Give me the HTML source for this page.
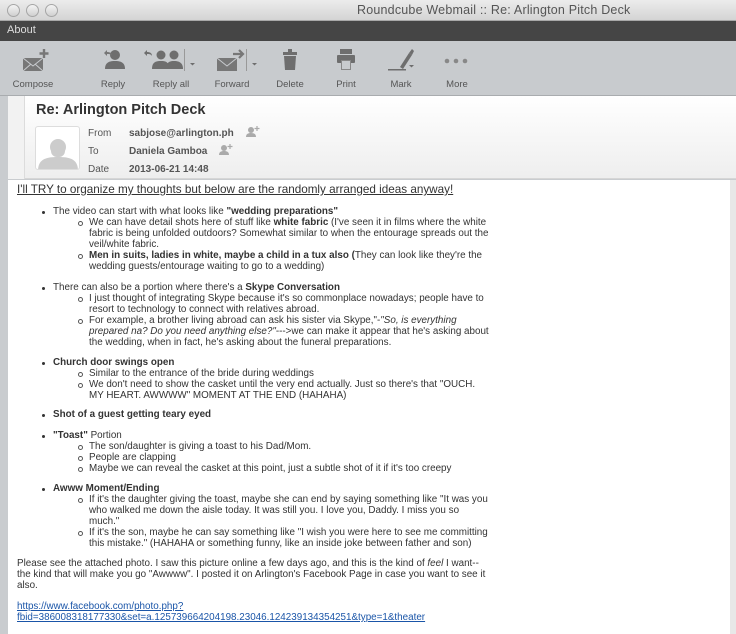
<!DOCTYPE html>
<html><head><meta charset="utf-8"><style>
*{margin:0;padding:0;box-sizing:border-box}
body{width:736px;height:634px;overflow:hidden;background:#c9cccf;font-family:"Liberation Sans",Arial,sans-serif;position:relative}
.a{position:absolute;white-space:nowrap}
#title{left:0;top:0;width:736px;height:21px;background:linear-gradient(#ececec,#d4d4d4);border-bottom:1px solid #a8a8a8}
.dot{position:absolute;top:4px;width:13px;height:13px;border-radius:50%;border:1px solid #a6a6a6;background:linear-gradient(#f4f4f4,#d0d0d0)}
#menu{left:0;top:21px;width:736px;height:20px;background:#454545;color:#ddd;font-size:11px;padding:3px 7px}
#tb{left:0;top:41px;width:736px;height:55px;background:#c8cbce;border-bottom:1px solid #a9acaf}
.tl{position:absolute;top:38px;font-size:9.5px;color:#555;transform:translateX(-50%)}
#hdr{left:8px;top:96px;width:728px;height:83px;background:linear-gradient(#fff,#eeeeee);border-bottom:1px solid #d6d6d6}
#strip{left:8px;top:96px;width:17px;height:83px;background:#f2f2f2;border-right:1px solid #dcdcdc}
#body{left:8px;top:180px;width:724px;height:454px;background:#fff}
.t{position:absolute;white-space:nowrap;font-size:9.85px;color:#333;line-height:11px}
.b{font-weight:bold}
.o::before{content:"";position:absolute;left:-11px;top:5px;width:3px;height:3px;border-radius:50%;background:#333}
.i::before{content:"";position:absolute;left:-11px;top:4px;width:3px;height:3px;border-radius:50%;border:1px solid #555}
.l{color:#1a55a8;text-decoration:underline}
</style></head><body>
<div class="a" id="title">
<div class="dot" style="left:7px"></div><div class="dot" style="left:26px"></div><div class="dot" style="left:45px"></div>
<div class="a" style="left:357px;top:3px;font-size:12.5px;color:#555;letter-spacing:.2px">Roundcube Webmail :: Re: Arlington Pitch Deck</div>
</div>
<div class="a" id="menu">About</div>
<div class="a" id="tb">
<svg width="736" height="40" style="position:absolute;left:0;top:0" fill="#6e6e6e">
<rect x="23" y="17" width="20" height="13" fill="#777"/><path d="M23 17 L33 25 L43 17 M23 30 L31 23 M43 30 L35 23" stroke="#c8cbce" stroke-width="1" fill="none"/>
<path d="M44 8v9M39.5 12.5h9" stroke="#777" stroke-width="2.4"/>
<circle cx="115" cy="14" r="5"/><path d="M105 28c0-7 5-8 10-8s10 1 10 8z"/><path d="M104 12 l3-3 v2 c3 0 5 1 5 4 c-1-2-3-2-5-2 v2z" fill="#777"/>
<circle cx="161" cy="14" r="4.5"/><path d="M152 28c0-7 4-8 9-8s8 1 8 8z"/><circle cx="174" cy="14" r="4.5"/><path d="M166 28c0-7 4-8 8-8s9 1 9 8z"/><path d="M144 12 l3-3 v2 c3 0 5 1 5 4 c-1-2-3-2-5-2 v2z"/>
<rect x="184" y="8" width="1" height="22" fill="#999"/><path d="M190 22h5l-2.5 2.5z"/>
<rect x="217" y="17" width="20" height="13" fill="#777"/><path d="M217 17 L227 25 L237 17" stroke="#c8cbce" fill="none"/>
<path d="M233 13h9M239 9l4 4-4 4" stroke="#777" stroke-width="2.2" fill="none"/>
<rect x="246" y="8" width="1" height="22" fill="#999"/><path d="M252 22h5l-2.5 2.5z"/>
<rect x="283" y="11" width="14" height="3"/><rect x="288" y="8" width="4" height="3"/><path d="M284 15h12l-1 14h-10z"/>
<rect x="340" y="8" width="12" height="5"/><rect x="337" y="14" width="18" height="8" rx="1"/><rect x="341" y="19" width="10" height="10" fill="#888"/><rect x="342" y="20" width="8" height="8" fill="#c8cbce"/>
<path d="M400 26 l9-14 3 2-9 14z"/><path d="M409 12l3-4 2 2-2 4z"/><rect x="388" y="28" width="18" height="1.5"/><path d="M409 24h5l-2.5 2.5z"/>
<circle cx="447" cy="20" r="2.3" fill="#888"/><circle cx="456" cy="20" r="2.3" fill="#888"/><circle cx="465" cy="20" r="2.3" fill="#888"/>
</svg>
<div class="tl" style="left:33px">Compose</div><div class="tl" style="left:113px">Reply</div><div class="tl" style="left:171px">Reply all</div><div class="tl" style="left:232px">Forward</div><div class="tl" style="left:290px">Delete</div><div class="tl" style="left:346px">Print</div><div class="tl" style="left:401px">Mark</div><div class="tl" style="left:457px">More</div>
</div>
<div class="a" style="left:0;top:96px;width:8px;height:538px;background:#c9cccf"></div>
<div class="a" id="hdr"></div>
<div class="a" id="strip"></div>
<div class="a" style="left:36px;top:102px;font-size:14.5px;font-weight:bold;color:#333">Re: Arlington Pitch Deck</div>
<div class="a" style="left:35px;top:126px;width:45px;height:44px;border:1px solid #ddd;border-radius:3px;background:#fff;overflow:hidden">
<svg width="45" height="44"><circle cx="22" cy="20" r="8" fill="#ccc"/><path d="M2 44c0-12 8-14 20-14s20 2 20 14z" fill="#ccc"/><rect x="15" y="14" width="14" height="16" rx="6" fill="#ccc"/></svg></div>
<div class="a" style="left:88px;top:125px;font-size:10px;color:#555;line-height:18px">From<br>To<br>Date</div>
<div class="a" style="left:129px;top:125px;font-size:10px;color:#555;font-weight:bold;line-height:18px">sabjose@arlington.ph<br>Daniela Gamboa<br>2013-06-21 14:48</div>
<svg class="a" style="left:245px;top:125px" width="16" height="14" fill="#aaa"><circle cx="6" cy="5" r="3"/><path d="M1 12c0-3 2-4 5-4s5 1 5 4z"/><path d="M12 1v5M9.5 3.5h5" stroke="#aaa" stroke-width="1.2"/></svg>
<svg class="a" style="left:218px;top:143px" width="16" height="14" fill="#aaa"><circle cx="6" cy="5" r="3"/><path d="M1 12c0-3 2-4 5-4s5 1 5 4z"/><path d="M12 1v5M9.5 3.5h5" stroke="#aaa" stroke-width="1.2"/></svg>
<div class="a" id="body"></div>
<div class="a" style="left:730px;top:180px;width:6px;height:454px;background:#e8e8e8"></div>
<div class="t l" style="left:17px;top:183px;font-size:11.7px;line-height:13px;color:#333">I'll TRY to organize my thoughts but below are the randomly arranged ideas anyway!</div>

<div class="t o" style="left:53px;top:206px">The video can start with what looks like <b>"wedding preparations"</b></div>
<div class="t i" style="left:89px;top:217px">We can have detail shots here of stuff like <b>white fabric</b> (I've seen it in films where the white</div>
<div class="t" style="left:89px;top:228px">fabric is being unfolded outdoors? Somewhat similar to when the entourage spreads out the</div>
<div class="t" style="left:89px;top:239px">veil/white fabric.</div>
<div class="t i" style="left:89px;top:250px"><b>Men in suits, ladies in white, maybe a child in a tux also (</b>They can look like they're the</div>
<div class="t" style="left:89px;top:261px">wedding guests/entourage waiting to go to a wedding)</div>

<div class="t o" style="left:53px;top:282px">There can also be a portion where there's a <b>Skype Conversation</b></div>
<div class="t i" style="left:89px;top:293px">I just thought of integrating Skype because it's so commonplace nowadays; people have to</div>
<div class="t" style="left:89px;top:304px">resort to technology to connect with relatives abroad.</div>
<div class="t i" style="left:89px;top:315px">For example, a brother living abroad can ask his sister via Skype,"-<i>"So, is everything</i></div>
<div class="t" style="left:89px;top:326px"><i>prepared na? Do you need anything else?"</i>---&gt;we can make it appear that he's asking about</div>
<div class="t" style="left:89px;top:337px">the wedding, when in fact, he's asking about the funeral preparations.</div>

<div class="t o b" style="left:53px;top:357px">Church door swings open</div>
<div class="t i" style="left:89px;top:368px">Similar to the entrance of the bride during weddings</div>
<div class="t i" style="left:89px;top:379px">We don't need to show the casket until the very end actually. Just so there's that "OUCH.</div>
<div class="t" style="left:89px;top:390px">MY HEART. AWWWW" MOMENT AT THE END (HAHAHA)</div>

<div class="t o b" style="left:53px;top:409px">Shot of a guest getting teary eyed</div>

<div class="t o" style="left:53px;top:430px"><b>"Toast"</b> Portion</div>
<div class="t i" style="left:89px;top:441px">The son/daughter is giving a toast to his Dad/Mom.</div>
<div class="t i" style="left:89px;top:452px">People are clapping</div>
<div class="t i" style="left:89px;top:463px">Maybe we can reveal the casket at this point, just a subtle shot of it if it's too creepy</div>

<div class="t o b" style="left:53px;top:483px">Awww Moment/Ending</div>
<div class="t i" style="left:89px;top:494px">If it's the daughter giving the toast, maybe she can end by saying something like "It was you</div>
<div class="t" style="left:89px;top:505px">who walked me down the aisle today. It was still you. I love you, Daddy. I miss you so</div>
<div class="t" style="left:89px;top:516px">much."</div>
<div class="t i" style="left:89px;top:527px">If it's the son, maybe he can say something like "I wish you were here to see me committing</div>
<div class="t" style="left:89px;top:538px">this mistake." (HAHAHA or something funny, like an inside joke between father and son)</div>

<div class="t" style="left:17px;top:558px">Please see the attached photo. I saw this picture online a few days ago, and this is the kind of <i>feel</i> I want--</div>
<div class="t" style="left:17px;top:569px">the kind that will make you go "Awwww". I posted it on Arlington's Facebook Page in case you want to see it</div>
<div class="t" style="left:17px;top:580px">also.</div>
<div class="t l" style="left:17px;top:601px">https://www.facebook.com/photo.php?</div>
<div class="t l" style="left:17px;top:612px">fbid=386008318177330&amp;set=a.125739664204198.23046.124239134354251&amp;type=1&amp;theater</div>
</body></html>
